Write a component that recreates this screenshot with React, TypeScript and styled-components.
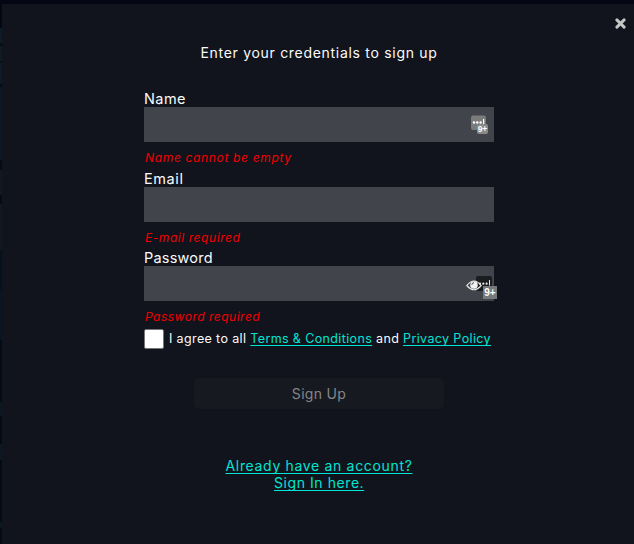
import React from "react";
import styled, { createGlobalStyle } from "styled-components";

const GlobalStyle = createGlobalStyle`
  * { box-sizing: border-box; }
  body {
    margin: 0;
    overflow: hidden;
    background: #040713;
    color: #fbfbfb;
    font-family: Inter, "Liberation Sans", sans-serif;
  }
`;

const Backdrop = styled.div`
  height: 544px;
  padding: 4px 0 0 2px;
  background:
    linear-gradient(#040713 0 28px, #0b1c29 28px 43px, #050c18 43px 46px, #111923 46px 61px,
      #07121f 61px 63px, #0c1b28 63px 84px, #050c18 84px 87px, #0b1926 87px 160px,
      #050c18 160px 170px, #111821 170px 195px, #050c18 195px 204px, #111821 204px 250px,
      #07111e 250px 290px, #081522 290px 340px, #040a16 340px 402px, #0b1824 402px 416px,
      #040a16 416px 444px, #0b1824 444px 460px, #040a16 460px 522px, #0b1824 522px 528px,
      #040a16 528px) left / 2px 100% no-repeat,
    #040713;
`;

const Dialog = styled.main`
  position: relative;
  height: 540px;
  display: flex;
  flex-direction: column;
  align-items: center;
  background: #11141d;
`;

const Close = styled.button`
  position: absolute;
  top: 14px;
  right: 8px;
  width: 11px;
  height: 11px;
  padding: 0;
  border: 0;
  background: none;
  color: #c4c4c5;
  svg { display: block; }
`;

const Line = styled.span<{ $width: number; $spacing: number }>`
  display: block;
  width: ${(p) => p.$width}px;
  letter-spacing: ${(p) => p.$spacing}px;
  white-space: nowrap;
`;

const Title = styled.h1`
  margin: 40px 0 0;
  font-size: 14px;
  line-height: 18px;
  font-weight: 400;
`;

const Form = styled.form`
  width: 350px;
  margin: 28px 0 0 2px;
`;

const Field = styled.div`
  height: 79.5px;
`;

const Label = styled.label`
  display: block;
  height: 17px;
  font-size: 14.5px;
  line-height: 17px;
`;

const InputBox = styled.div`
  position: relative;
  height: 35px;
`;

const Input = styled.input`
  display: block;
  width: 100%;
  height: 100%;
  border: 0;
  padding: 0 36px 0 10px;
  background: #41444b;
  color: #fff;
  font: inherit;
  outline: none;
`;

const FieldIcon = styled.svg<{ $left: number; $top: number }>`
  position: absolute;
  left: ${(p) => p.$left}px;
  top: ${(p) => p.$top}px;
  overflow: visible;
  font-family: "Liberation Sans", sans-serif;
  font-weight: 700;
`;

const ErrorText = styled.div`
  padding: 8px 0 0 1px;
  font-size: 12px;
  line-height: 16px;
  font-style: italic;
  color: #f00000;
`;

const Terms = styled.div`
  display: flex;
  align-items: center;
  gap: 5px;
  height: 20px;
  font-size: 12.5px;
`;

const Checkbox = styled.input`
  appearance: none;
  flex: none;
  width: 20px;
  height: 20px;
  margin: 0;
  border: 1px solid #767676;
  border-radius: 2px;
  background: #fff;
`;

const Link = styled.a`
  color: #00e5d4;
  text-decoration: underline;
  text-decoration-thickness: 1px;
  text-underline-offset: 2px;
  text-decoration-skip-ink: none;
`;

const Submit = styled.button`
  display: flex;
  align-items: center;
  justify-content: center;
  width: 250px;
  height: 31px;
  margin: 29px auto 0;
  padding: 0;
  border: 0;
  border-radius: 5px;
  background: #161920;
  color: #858689;
  font: inherit;
  font-size: 14px;
`;

const SignIn = styled.div`
  display: flex;
  flex-direction: column;
  align-items: center;
  margin: 48px 0 0 2px;
  font-size: 14px;
  line-height: 17.5px;
`;

function BadgeIcon() {
  return (
    <FieldIcon $left={327} $top={8} width="18" height="20" aria-hidden="true">
      <rect x="0" y="0.5" width="15" height="14.5" rx="2" fill="#7b7b7b" />
      <g fill="#fff">
        <circle cx="3" cy="7.5" r="1.2" />
        <circle cx="6.3" cy="7.5" r="1.2" />
        <circle cx="9.6" cy="7.5" r="1.2" />
        <rect x="12" y="4" width="1.2" height="5" />
      </g>
      <rect x="6" y="9" width="11" height="10" rx="2" fill="#898989" />
      <text x="11.5" y="17" fontSize="8.5" textAnchor="middle" fill="#fff">9+</text>
    </FieldIcon>
  );
}

function PasswordIcon() {
  return (
    <FieldIcon $left={322} $top={9} width="31" height="25" aria-hidden="true">
      <rect x="10" y="1" width="16" height="15" rx="2" fill="#1b1c20" />
      <path d="M.8 10.5Q8 1.5 15.2 10.5Q8 19 .8 10.5Z" fill="none" stroke="#e8e8e8" strokeWidth="1.2" />
      <circle cx="8" cy="10" r="3.8" fill="#f1f1f1" />
      <path d="M5.8 9.8Q6 7.8 8 7.7" fill="none" stroke="#41444b" />
      <g fill="#e9e9e9">
        <circle cx="14" cy="8.7" r="1.1" />
        <circle cx="17.3" cy="8.7" r="1.1" />
        <circle cx="20.6" cy="8.7" r="1.1" />
        <rect x="23" y="5" width="1" height="5.5" />
      </g>
      <rect x="17" y="11" width="14" height="13" fill="#77797a" />
      <text x="24" y="21" fontSize="10" textAnchor="middle" fill="#fff">9+</text>
    </FieldIcon>
  );
}

const fields = [
  { name: "Name", width: 43, spacing: 0.45, error: "Name cannot be empty", errorWidth: 148, errorSpacing: 0.66, type: "text" },
  { name: "Email", width: 40, spacing: 0.6, error: "E-mail required", errorWidth: 97, errorSpacing: 0.56, type: "email" },
  { name: "Password", width: 70, spacing: 0.2, error: "Password required", errorWidth: 117, errorSpacing: 0.5, type: "password" },
];

export default function App() {
  return (
    <>
      <GlobalStyle />
      <Backdrop>
        <Dialog>
          <Close aria-label="Close">
            <svg width="11" height="11" viewBox="0 0 11 11">
              <path d="M1.9 1.9L9.1 9.1M9.1 1.9L1.9 9.1" stroke="currentColor" strokeWidth="3" strokeLinecap="round" />
            </svg>
          </Close>
          <Title><Line $width={235} $spacing={0.7}>Enter your credentials to sign up</Line></Title>
          <Form onSubmit={(e) => e.preventDefault()}>
            {fields.map((f) => (
              <Field key={f.name}>
                <Label htmlFor={f.name}><Line $width={f.width} $spacing={f.spacing}>{f.name}</Line></Label>
                <InputBox>
                  <Input id={f.name} type={f.type} />
                  {f.type === "text" && <BadgeIcon />}
                  {f.type === "password" && <PasswordIcon />}
                </InputBox>
                <ErrorText><Line $width={f.errorWidth} $spacing={f.errorSpacing}>{f.error}</Line></ErrorText>
              </Field>
            ))}
            <Terms>
              <Checkbox type="checkbox" aria-label="I agree" />
              <Line $width={323} $spacing={0.37}>
                I agree to all <Link>Terms &amp; Conditions</Link> and <Link>Privacy Policy</Link>
              </Line>
            </Terms>
            <Submit disabled><Line $width={55} $spacing={0.3}>Sign Up</Line></Submit>
          </Form>
          <SignIn>
            <Link><Line $width={187} $spacing={0.67}>Already have an account?</Line></Link>
            <Link><Line $width={90} $spacing={0.57}>Sign In here.</Line></Link>
          </SignIn>
        </Dialog>
      </Backdrop>
    </>
  );
}
